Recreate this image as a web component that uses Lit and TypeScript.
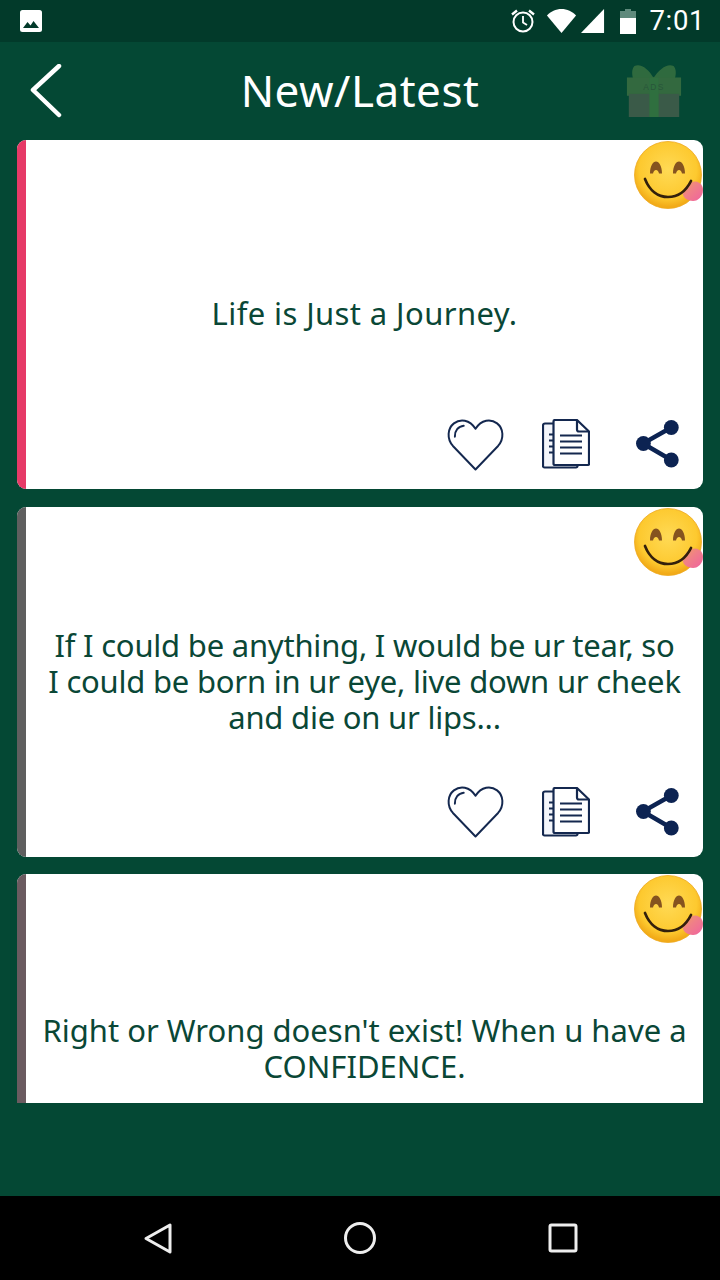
import { LitElement, html, css } from "lit";
import { customElement } from "lit/decorators.js";

const emoji = html`<svg class="emoji" viewBox="0 0 70 70" aria-hidden="true">
  <defs>
    <radialGradient id="f" cx="50%" cy="42%" r="55%"><stop offset="0" stop-color="#ffda55"/><stop offset=".78" stop-color="#fdc92f"/><stop offset="1" stop-color="#f2ab18"/></radialGradient>
    <linearGradient id="t" x1="0" y1="0" x2="1" y2="1"><stop offset="0" stop-color="#f2a05e"/><stop offset=".45" stop-color="#f07f88"/><stop offset="1" stop-color="#f0629f"/></linearGradient>
  </defs>
  <circle cx="35" cy="35" r="33.500" fill="url(#f)" stroke="#eda81e" stroke-width=".8"/>
  <path d="M17 33.500c0-7.500 3-12 6-12s6 4.500 6 12h-3c-.5-2.200-1.500-3.500-3-3.500s-2.500 1.300-3 3.500z" fill="#85531f"/>
  <path d="M40 33.500c0-7.500 3-12 6-12s6 4.500 6 12h-3c-.5-2.200-1.500-3.500-3-3.500s-2.500 1.300-3 3.500z" fill="#85531f"/>
  <path d="M49.500 52c2.500-6.500 8-11 13-10.500 4.500.5 7.500 4 7.500 8.500 0 6-4.500 11-10 11-6 0-10.500-3.500-10.500-9z" fill="url(#t)"/>
  <path d="M12 39c4.500 11.500 13 18 23 18 10 0 18-6 23-16" fill="none" stroke="#33200c" stroke-width="2.700" stroke-linecap="round"/>
</svg>`;

const icons = html`<div class="actions">
  <svg class="heart" viewBox="0 0 58 54" aria-hidden="true" fill="none" stroke="#14284f" stroke-width="2" stroke-linejoin="round" stroke-linecap="round">
    <path d="M29 52.500 6 28.500C-.5 21 .5 10.500 7 5.500c6.500-5 16-4 22 5.500 6-9.500 15.500-10.500 22-5.500s7.500 15.500 1 23z"/>
    <path d="M8 19c-.3-6 3.500-10.500 9-11"/>
  </svg>
  <svg class="copy" viewBox="0 0 48 50" aria-hidden="true" fill="#fff" stroke="#14284f" stroke-width="2.200" stroke-linejoin="round">
    <path d="M11 4.500H3a2 2 0 0 0-2 2V47a1.500 1.500 0 0 0 1.500 1.500H34a1.500 1.500 0 0 0 1.500-1.500v-1" fill="#f4f6fb"/>
    <path d="M13 1h22l12 11.500V45a1 1 0 0 1-1 1H13a1.500 1.500 0 0 1-1.500-1.500v-42A1.500 1.500 0 0 1 13 1z"/>
    <path d="M35 1v9.500a2 2 0 0 0 2 2h10" fill="none"/>
    <path d="M18 16.500h22M18 22.500h22M18 28.500h22M18 34.500h22" stroke-width="2.200"/>
    <path d="M7 15.500h4.500M7 21.500h4.500M7 27.500h4.500M7 33.500h4.500" stroke-width="1.800"/>
  </svg>
  <svg class="share" viewBox="0 0 43 48" aria-hidden="true">
    <path d="M35.300 7.500 6.900 23.500 35.300 40" fill="none" stroke="#0c2352" stroke-width="4.400"/>
    <circle cx="35.300" cy="7.500" r="7.400" fill="#0c2352"/><circle cx="7.400" cy="23.500" r="7.400" fill="#0c2352"/><circle cx="35.300" cy="40" r="7.400" fill="#0c2352"/>
  </svg>
</div>`;

const cards = [
  { text: "Life is Just a Journey.", color: "#e63a67", cls: "c1" },
  { text: "If I could be anything, I would be ur tear, so\nI could be born in ur eye, live down ur cheek\nand die on ur lips...", color: "#5f5f5f", cls: "c2" },
  { text: "Right or Wrong doesn't exist! When u have a\nCONFIDENCE.", color: "#6b5b60", cls: "c3" },
];

@customElement("app-root")
export class AppRoot extends LitElement {
  static styles = css`
    :host { display: block; width: 720px; height: 1280px; overflow: hidden; font-family: "Noto Sans", "Open Sans", sans-serif; }
    .page { height: 1280px; display: flex; flex-direction: column; background: #044834; }
    .status { height: 42px; flex: none; background: #023a2a; display: flex; align-items: center; padding: 0 15px 0 19px; color: #fff; }
    .status .pic { width: 24px; height: 24px; }
    .status .right { margin-left: auto; display: flex; align-items: center; }
    .alarm { width: 26px; height: 26px; margin-right: 10px; }
    .wifi { width: 31px; height: 26px; margin-right: 3px; }
    .signal { width: 25px; height: 26px; margin-right: 14px; }
    .batt { width: 18px; height: 26px; margin-right: 13px; }
    .clock { font: 400 27.5px/42px Roboto, sans-serif; letter-spacing: .6px; }
    .bar { height: 98px; flex: none; position: relative; display: flex; align-items: center; justify-content: center; }
    .back { position: absolute; left: 30px; top: 22px; width: 34px; height: 56px; }
    .gift { position: absolute; left: 626px; top: 21px; width: 56px; height: 54px; }
    h1 { margin: 0; font-size: 44px; line-height: 96px; padding-bottom: 2px; font-weight: 400; color: #fff; letter-spacing: .5px; }
    .list { height: 963px; flex: none; overflow: hidden; padding: 0 17px; display: flex; flex-direction: column; gap: 17.5px; }
    .card { position: relative; flex: none; height: 350px; box-sizing: border-box; background: #fff; border-radius: 9px; overflow: hidden; display: flex; }
    .card.c1 { height: 349px; }
    .strip { width: 9px; flex: none; }
    .body { flex: 1; position: relative; display: flex; flex-direction: column; }
    .text { margin: 0; color: #0a4736; font-size: 31px; line-height: 36px; text-align: center; white-space: pre-line; position: absolute; left: 0; right: 0; }
    .c1 .text { top: 155px; letter-spacing: .4px; }
    .c2 .text { top: 120px; letter-spacing: -.22px; }
    .c3 .text { top: 138px; }
    .emoji { position: absolute; right: 0; top: 0; width: 70px; height: 70px; }
    .actions { margin-top: auto; display: flex; align-items: center; height: 54px; margin-bottom: 18px; padding-left: 421px; }
    .heart { width: 57px; height: 53px; flex: none; }
    .copy { width: 48px; height: 50px; flex: none; margin-left: 38px; }
    .share { width: 43px; height: 48px; flex: none; margin-left: 46px; }
    .spacer { flex: 1; }
    .nav { height: 84px; flex: none; background: #000; position: relative; }
    .nav svg { position: absolute; width: 32px; height: 32px; top: 26px; }
    .n1 { left: 143px; } .n2 { left: 344px; } .n3 { left: 547px; }
  `;

  render() {
    return html`<div class="page">
      <div class="status">
        <svg class="pic" viewBox="0 0 24 24" aria-hidden="true"><rect x="1" y="1" width="22" height="22" rx="2.500" fill="#fff"/><path d="M4 19l4.500-6 3 3.500 3-4.500L20 19z" fill="#023a2a"/></svg>
        <div class="right">
          <svg class="alarm" viewBox="0 0 26 26" aria-hidden="true" fill="none" stroke="#fff" stroke-width="2"><circle cx="13" cy="14" r="9.500"/><path d="M13 8v6.500l4 2.500" stroke-width="1.800"/><path d="M2 6.500 7 2.500M24 6.500l-5-4" stroke-width="2.400"/></svg>
          <svg class="wifi" viewBox="0 0 33 26" aria-hidden="true" preserveAspectRatio="none"><path d="M16.500 25 1 7.500C5 3.500 10.500 1 16.500 1S28 3.500 32 7.500z" fill="#fff"/></svg>
          <svg class="signal" viewBox="0 0 26 26" aria-hidden="true" preserveAspectRatio="none"><path d="M25 1v24H1z" fill="#fff"/></svg>
          <svg class="batt" viewBox="0 0 18 26" aria-hidden="true"><path d="M6 1h6v2h5v7H1V3h5z" fill="#5f8a7c"/><path d="M1 10h16v16H1z" fill="#fff"/></svg>
          <span class="clock">7:01</span>
        </div>
      </div>
      <div class="bar">
        <svg class="back" viewBox="0 0 34 56" aria-hidden="true"><path d="M29 2 3 26l26 25" fill="none" stroke="#fff" stroke-width="4.500" stroke-linecap="round" stroke-linejoin="round"/></svg>
        <h1>New/Latest</h1>
        <svg class="gift" viewBox="0 0 60 56" aria-hidden="true" preserveAspectRatio="none">
          <path d="M30 16C24 6 16 0 9 3c-3 3-3 9-1 14h44c2-5 2-11-1-14-7-3-15 3-22 13z" fill="#2f6a3e"/>
          <rect x="1" y="15" width="58" height="19" fill="#33693f"/>
          <rect x="3" y="32" width="54" height="24" fill="#3a5a48"/>
          <rect x="25" y="15" width="10" height="41" fill="#2f6f3f"/>
          <text x="30" y="28" text-anchor="middle" font-size="9" letter-spacing="1.500" fill="#28563a" font-family="Liberation Sans, sans-serif">ADS</text>
        </svg>
      </div>
      <div class="list">
        ${cards.map((c) => html`<div class="card ${c.cls}">
          <div class="strip" style="background:${c.color}"></div>
          <div class="body"><p class="text">${c.text}</p>${icons}</div>
          ${emoji}
        </div>`)}
      </div>
      <div class="spacer"></div>
      <div class="nav">
        <svg class="n1" viewBox="0 0 32 32" aria-hidden="true"><path d="M27 3v27L3 16.500z" fill="none" stroke="#eee" stroke-width="3" stroke-linejoin="round"/></svg>
        <svg class="n2" viewBox="0 0 32 32" aria-hidden="true"><circle cx="16" cy="16" r="14.500" fill="none" stroke="#eee" stroke-width="3"/></svg>
        <svg class="n3" viewBox="0 0 32 32" aria-hidden="true"><rect x="3" y="3" width="26" height="26" rx="1.500" fill="none" stroke="#eee" stroke-width="3"/></svg>
      </div>
    </div>`;
  }
}
